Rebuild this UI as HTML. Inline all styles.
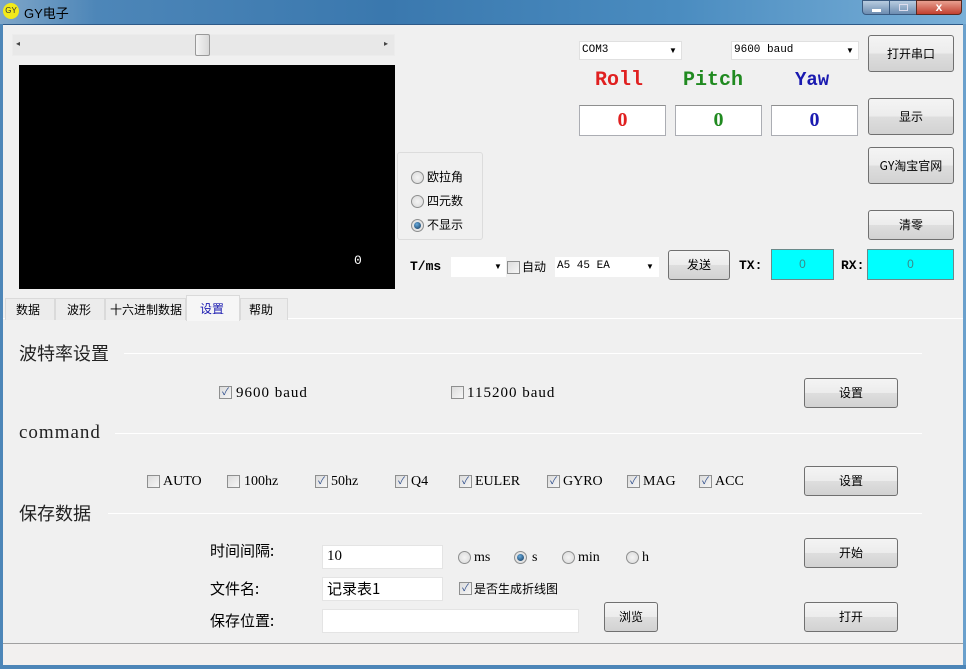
<!DOCTYPE html>
<html><head><meta charset="utf-8"><style>
*{margin:0;padding:0;box-sizing:border-box}
body{width:966px;height:669px;overflow:hidden;background:#f0f0f0;position:relative;font-family:"Liberation Sans","Noto Sans CJK SC",sans-serif;font-size:12px;color:#000}
.a{position:absolute}
.btn{position:absolute;border:1px solid #707070;border-radius:3px;background:linear-gradient(#f4f4f4,#ececec 50%,#dedede 50%,#d2d2d2);text-align:center;font-size:12px;font-family:"Noto Sans CJK SC",sans-serif}
.cb{position:absolute;width:13px;height:13px;border:1px solid #8e8f8f;background:linear-gradient(135deg,#dcdcdc,#f6f6f6);font-size:10px;line-height:11px;text-align:center;color:#2a4a8a}
.rd{position:absolute;width:13px;height:13px;border-radius:50%;border:1px solid #8e8f8f;background:radial-gradient(#f4f4f4,#d8d8d8)}
.rd.on::after{content:"";position:absolute;left:2px;top:2px;width:7px;height:7px;border-radius:50%;background:radial-gradient(circle at 40% 35%,#6ad,#135)}
.ser{font-family:"Liberation Serif","Noto Serif CJK SC",serif}
.mono{font-family:"Liberation Mono",monospace}
.tb{position:absolute;background:#fff;border:1px solid #abadb3;border-top-color:#8e8f8f}
.line{position:absolute;height:1px;background:#d0d0d0;border-bottom:1px solid #fff}
.cn{font-family:"Noto Sans CJK SC",sans-serif}
.ls{letter-spacing:1px}
</style></head><body>
<div class="a" style="left:0;top:0;width:966px;height:24px;background:linear-gradient(90deg,#7fa6c8 0%,#4d86b8 10%,#3a78ae 40%,#4a8cc0 70%,#7ab0d8 100%)"></div>
<div class="a" style="left:3px;top:3px;width:16px;height:16px;border-radius:50%;background:#f2ea1a;font-size:8px;line-height:16px;text-align:center;color:#333">GY</div>
<div class="a" style="left:24px;top:3px;font-size:13px;color:#000;font-family:'Liberation Sans','Noto Sans CJK SC',sans-serif">GY电子</div>
<div class="a" style="left:862px;top:0;width:28px;height:15px;background:linear-gradient(#b8cce0,#6c8cb0);border:1px solid #3a5a80;border-radius:0 0 0 4px"><div class="a" style="left:9px;top:8px;width:9px;height:3px;background:#fff"></div></div>
<div class="a" style="left:889px;top:0;width:28px;height:15px;background:linear-gradient(#b8cce0,#6c8cb0);border:1px solid #3a5a80"><div class="a" style="left:9px;top:3px;width:9px;height:7px;border:1px solid #dde"></div></div>
<div class="a" style="left:916px;top:0;width:46px;height:15px;background:linear-gradient(#e8a090,#c24030);border:1px solid #5a2a20;border-radius:0 0 4px 0;color:#fff;font-weight:bold;text-align:center;line-height:13px;font-size:12px">x</div>
<div class="a" style="left:0;top:24px;width:3px;height:645px;background:#4d86b8"></div>
<div class="a" style="left:963px;top:24px;width:3px;height:645px;background:#6aa0cc"></div>
<div class="a" style="left:0;top:665px;width:966px;height:4px;background:#4d86b8"></div>
<div class="a" style="left:3px;top:24px;width:960px;height:1px;background:#2e5a88"></div>

<div class="a" style="left:12px;top:34px;width:383px;height:22px;background:#e8e8e8;border:1px solid #ececec"></div>
<div class="a" style="left:16px;top:39px;font-size:8px;color:#444">◂</div>
<div class="a" style="left:384px;top:39px;font-size:8px;color:#444">▸</div>
<div class="a" style="left:195px;top:34px;width:15px;height:22px;border:1px solid #999;border-radius:2px;background:linear-gradient(90deg,#f4f4f4,#d8d8d8)"></div>
<div class="a" style="left:19px;top:65px;width:376px;height:224px;background:#000"></div>
<div class="a mono" style="left:354px;top:253px;color:#fff;font-size:13px">0</div>
<div class="a" style="left:397px;top:152px;width:86px;height:88px;border:1px solid #dcdcdc;border-radius:3px"></div>
<div class="rd" style="left:411px;top:171px"></div><div class="a cn" style="left:427px;top:168px">欧拉角</div>
<div class="rd" style="left:411px;top:195px"></div><div class="a cn" style="left:427px;top:192px">四元数</div>
<div class="rd on" style="left:411px;top:219px"></div><div class="a cn" style="left:427px;top:216px">不显示</div>
<div class="tb mono" style="left:579px;top:41px;width:103px;height:19px;border-color:#e0e0e0;font-size:11px;padding:2px 2px">COM3</div><div class="a" style="left:669px;top:46px;font-size:8px">▼</div>
<div class="tb mono" style="left:731px;top:41px;width:128px;height:19px;border-color:#e0e0e0;font-size:11px;padding:2px 2px">9600 baud</div><div class="a" style="left:846px;top:46px;font-size:8px">▼</div>
<div class="btn" style="left:868px;top:35px;width:86px;height:37px;line-height:35px">打开串口</div>
<div class="a mono" style="left:595px;top:69px;color:#e02020;font-size:20px;font-weight:bold">Roll</div>
<div class="a mono" style="left:683px;top:69px;color:#208a20;font-size:20px;font-weight:bold">Pitch</div>
<div class="a mono" style="left:795px;top:69px;color:#1a1ab0;font-size:19px;font-weight:bold">Yaw</div>
<div class="tb ser" style="left:579px;top:105px;width:87px;height:31px;text-align:center;color:#e02020;font-size:20px;font-weight:bold;line-height:29px">0</div>
<div class="tb ser" style="left:675px;top:105px;width:87px;height:31px;text-align:center;color:#208a20;font-size:20px;font-weight:bold;line-height:29px">0</div>
<div class="tb ser" style="left:771px;top:105px;width:87px;height:31px;text-align:center;color:#1a1ab0;font-size:20px;font-weight:bold;line-height:29px">0</div>
<div class="btn" style="left:868px;top:98px;width:86px;height:37px;line-height:35px">显示</div>
<div class="btn" style="left:868px;top:147px;width:86px;height:37px;line-height:35px">GY淘宝官网</div>
<div class="btn" style="left:868px;top:210px;width:86px;height:30px;line-height:28px">清零</div>
<div class="a mono" style="left:410px;top:259px;font-weight:bold;font-size:13px">T/ms</div>
<div class="tb" style="left:451px;top:257px;width:55px;height:20px;border-color:#fff"></div><div class="a" style="left:494px;top:262px;font-size:8px">▼</div>
<div class="cb" style="left:507px;top:261px"></div><div class="a cn" style="left:522px;top:258px">自动</div>
<div class="tb mono" style="left:555px;top:257px;width:104px;height:20px;border-color:#fff;font-size:11px;padding:2px 1px">A5 45 EA</div><div class="a" style="left:646px;top:262px;font-size:8px">▼</div>
<div class="btn" style="left:668px;top:250px;width:62px;height:30px;line-height:28px">发送</div>
<div class="a mono" style="left:739px;top:258px;font-weight:bold;font-size:13px">TX:</div>
<div class="a" style="left:771px;top:249px;width:63px;height:31px;background:#00ffff;border:1px solid #6a8a8a;text-align:center;line-height:29px;color:#3a8a8a">0</div>
<div class="a mono" style="left:841px;top:258px;font-weight:bold;font-size:13px">RX:</div>
<div class="a" style="left:867px;top:249px;width:87px;height:31px;background:#00ffff;border:1px solid #6a8a8a;text-align:center;line-height:29px;color:#3a8a8a">0</div>
<div class="line" style="left:3px;top:318px;width:960px;background:#fff;border:none"></div>

<div class="a" style="left:5px;top:298px;width:50px;height:22px;border:1px solid #dadada;border-bottom:none;background:#ececec"></div><div class="a cn" style="left:16px;top:301px">数据</div>
<div class="a" style="left:55px;top:298px;width:50px;height:22px;border:1px solid #dadada;border-bottom:none;background:#ececec"></div><div class="a cn" style="left:67px;top:301px">波形</div>
<div class="a" style="left:105px;top:298px;width:81px;height:22px;border:1px solid #dadada;border-bottom:none;background:#ececec"></div><div class="a cn" style="left:110px;top:301px">十六进制数据</div>
<div class="a" style="left:186px;top:295px;width:54px;height:26px;border:1px solid #dadada;border-bottom:none;background:#f6f6f6"></div><div class="a cn" style="left:200px;top:300px;color:#1a1ab0">设置</div>
<div class="a" style="left:240px;top:298px;width:48px;height:22px;border:1px solid #dadada;border-bottom:none;background:#ececec"></div><div class="a cn" style="left:249px;top:301px">帮助</div>

<div class="a cn" style="left:19px;top:340px;font-size:18px;color:#222">波特率设置</div>
<div class="line" style="left:124px;top:353px;width:798px"></div>
<div class="cb" style="left:219px;top:386px">✓</div><div class="a ser ls" style="left:236px;top:385px;font-size:15px">9600 baud</div>
<div class="cb" style="left:451px;top:386px"></div><div class="a ser ls" style="left:467px;top:385px;font-size:15px">115200 baud</div>
<div class="btn" style="left:804px;top:378px;width:94px;height:30px;line-height:28px">设置</div>

<div class="a ser ls" style="left:19px;top:422px;font-size:19px;color:#222">command</div>
<div class="line" style="left:115px;top:433px;width:807px"></div>
<div class="cb" style="left:147px;top:475px"></div><div class="a ser" style="left:163px;top:474px;font-size:14px">AUTO</div>
<div class="cb" style="left:227px;top:475px"></div><div class="a ser" style="left:244px;top:474px;font-size:14px">100hz</div>
<div class="cb" style="left:315px;top:475px">✓</div><div class="a ser" style="left:331px;top:474px;font-size:14px">50hz</div>
<div class="cb" style="left:395px;top:475px">✓</div><div class="a ser" style="left:411px;top:474px;font-size:14px">Q4</div>
<div class="cb" style="left:459px;top:475px">✓</div><div class="a ser" style="left:475px;top:474px;font-size:14px">EULER</div>
<div class="cb" style="left:547px;top:475px">✓</div><div class="a ser" style="left:563px;top:474px;font-size:14px">GYRO</div>
<div class="cb" style="left:627px;top:475px">✓</div><div class="a ser" style="left:643px;top:474px;font-size:14px">MAG</div>
<div class="cb" style="left:699px;top:475px">✓</div><div class="a ser" style="left:715px;top:474px;font-size:14px">ACC</div>
<div class="btn" style="left:804px;top:466px;width:94px;height:30px;line-height:28px">设置</div>

<div class="a cn" style="left:19px;top:500px;font-size:18px;color:#222">保存数据</div>
<div class="line" style="left:108px;top:513px;width:814px"></div>
<div class="a cn" style="left:210px;top:540px;font-size:15px">时间间隔:</div>
<div class="tb ser" style="left:322px;top:545px;width:121px;height:24px;border-color:#e4e4e4;font-size:15px;padding:2px 4px">10</div>
<div class="rd" style="left:458px;top:551px"></div><div class="a ser" style="left:474px;top:550px;font-size:14px">ms</div>
<div class="rd on" style="left:514px;top:551px"></div><div class="a ser" style="left:532px;top:550px;font-size:14px">s</div>
<div class="rd" style="left:562px;top:551px"></div><div class="a ser" style="left:578px;top:550px;font-size:14px">min</div>
<div class="rd" style="left:626px;top:551px"></div><div class="a ser" style="left:642px;top:550px;font-size:14px">h</div>
<div class="btn" style="left:804px;top:538px;width:94px;height:30px;line-height:28px">开始</div>
<div class="a cn" style="left:210px;top:578px;font-size:15px">文件名:</div>
<div class="tb cn" style="left:322px;top:577px;width:121px;height:24px;border-color:#e4e4e4;font-size:15px;padding:0 4px;line-height:22px">记录表1</div>
<div class="cb" style="left:459px;top:582px">✓</div><div class="a cn" style="left:474px;top:580px">是否生成折线图</div>
<div class="a cn" style="left:210px;top:610px;font-size:15px">保存位置:</div>
<div class="tb" style="left:322px;top:609px;width:257px;height:24px;border-color:#e4e4e4"></div>
<div class="btn" style="left:604px;top:602px;width:54px;height:30px;line-height:28px">浏览</div>
<div class="btn" style="left:804px;top:602px;width:94px;height:30px;line-height:28px">打开</div>
<div class="a" style="left:3px;top:643px;width:960px;height:1px;background:#a0a0a0"></div>
<div class="a" style="left:3px;top:644px;width:960px;height:21px;background:#f2f0ef"></div>
</body></html>
